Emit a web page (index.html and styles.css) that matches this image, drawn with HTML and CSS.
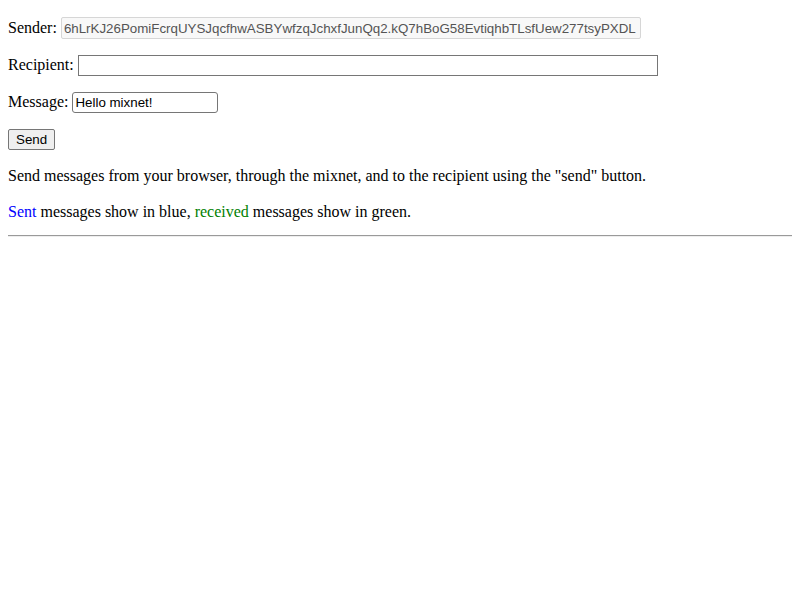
FILE: index.html
```html
<!DOCTYPE html>
<html>
<head>
<meta charset="utf-8">
<title>Mixnet chat</title>
<link rel="stylesheet" href="styles.css">
</head>
<body>
<p class="row first">Sender: <input class="field sender" type="text" readonly value="6hLrKJ26PomiFcrqUYSJqcfhwASBYwfzqJchxfJunQq2.kQ7hBoG58EvtiqhbTLsfUew277tsyPXDL"></p>
<p class="row">Recipient: <input class="field recipient" type="text" value=""></p>
<p class="row">Message: <input class="field message" type="text" value="Hello mixnet!"></p>
<p class="row"><button class="send" type="button">Send</button></p>
<p class="text">Send messages from your browser, through the mixnet, and to the recipient using the "send" button.</p>
<p class="text legend"><span class="sent">Sent</span> messages show in blue, <span class="received">received</span> messages show in green.</p>
<hr class="rule">
</body>
</html>
```
FILE: styles.css
```css
body {
  margin: 8px;
  font-family: "Liberation Serif", "Times New Roman", serif;
  font-size: 16px;
  color: #000;
  background: #fff;
}
.row, .text {
  margin: 16px 0;
}
.first {
  margin-top: 9px;
}
.text {
  line-height: 20px;
}
.legend {
  margin-bottom: 13px;
}
.field {
  font-family: "Liberation Sans", Arial, sans-serif;
  font-size: 13.33px;
  height: 21px;
  box-sizing: border-box;
  padding: 1px 2px;
  border: 1px solid #767676;
  color: #000;
  background: #fff;
  vertical-align: baseline;
}
.sender {
  width: 580px;
  height: 22px;
  border-color: #d6d6d6;
  background: #f8f8f8;
  color: #545454;
  border-radius: 2px;
}
.recipient {
  width: 580px;
}
.message {
  width: 146px;
  border-radius: 3px;
}
.send {
  font-family: "Liberation Sans", Arial, sans-serif;
  font-size: 13.33px;
  height: 21px;
  padding: 1px 7px;
  border: 1px solid #767676;
  border-radius: 2px;
  background: #efefef;
  color: #000;
}
.sent { color: #0000ff; }
.received { color: #008000; }
.rule {
  margin: 8px 0;
  border: 0;
  border-top: 1px solid #9a9a9a;
  border-bottom: 1px solid #eee;
}
```
